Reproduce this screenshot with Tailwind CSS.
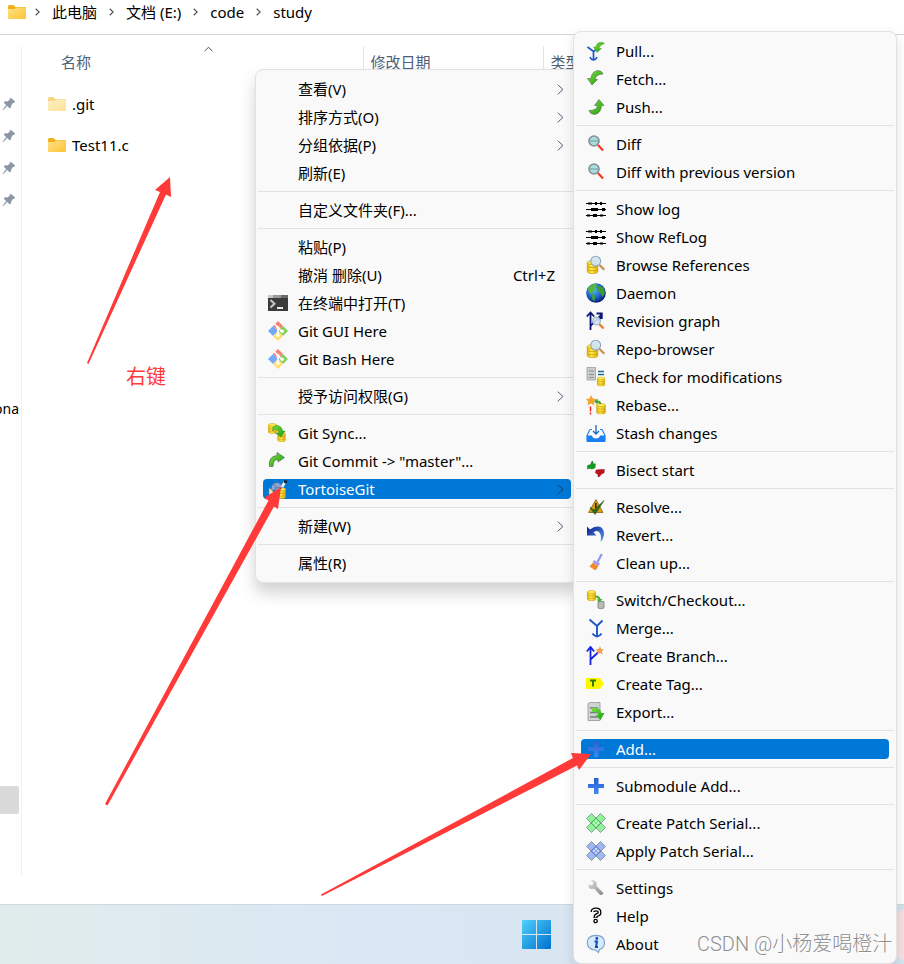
<!DOCTYPE html>
<html lang="zh-CN">
<head>
  <meta charset="UTF-8" />
  <meta name="viewport" content="width=device-width, initial-scale=1.0"/>
  <title>study</title>
  <script src="https://cdn.jsdelivr.net/npm/@tailwindcss/browser@4"></script>
</head>
<body class="bg-white text-black text-[15px] leading-5 font-['Noto_Sans','Noto_Sans_CJK_SC',sans-serif]">

  <!-- Icon sprite (kept rendered at zero size, gradients are lost with display:none) -->
  <svg class="absolute w-0 h-0" aria-hidden="true">
    <defs>
      <linearGradient id="gFolder" x1="0" y1="0" x2="1" y2="1"><stop offset="0" stop-color="#ffe08a"/><stop offset="1" stop-color="#fcc433"/></linearGradient>
      <linearGradient id="gGreen" x1="0" y1="0" x2="1" y2="1"><stop offset="0" stop-color="#7be23c"/><stop offset="1" stop-color="#1f9a12"/></linearGradient>
      <linearGradient id="gYellow" x1="0" y1="0" x2="1" y2="0"><stop offset="0" stop-color="#e8b80c"/><stop offset=".4" stop-color="#fff04a"/><stop offset="1" stop-color="#e0ae08"/></linearGradient>
      <linearGradient id="gBlue" x1="0" y1="0" x2="1" y2="1"><stop offset="0" stop-color="#0a1d8c"/><stop offset="1" stop-color="#5b9cf0"/></linearGradient>
      <linearGradient id="gPlus" x1="0" y1="0" x2="0" y2="1"><stop offset="0" stop-color="#2b5fd0"/><stop offset="1" stop-color="#3f8af0"/></linearGradient>
      <linearGradient id="gGrey" x1="0" y1="0" x2="1" y2="1"><stop offset="0" stop-color="#dcdcdc"/><stop offset="1" stop-color="#8a8a8a"/></linearGradient>
      <linearGradient id="gWin" x1="0" y1="0" x2="1" y2="1"><stop offset="0" stop-color="#4fd0fa"/><stop offset="1" stop-color="#0070d0"/></linearGradient>
      <radialGradient id="gGlobe" cx=".4" cy=".35" r=".65"><stop offset="0" stop-color="#5ab8f4"/><stop offset=".6" stop-color="#1c62c8"/><stop offset="1" stop-color="#0a1f78"/></radialGradient>

      <symbol id="folder" viewBox="0 0 18 14"><path d="M0 1.5Q0 0 1.5 0H5.5L7.500 2H17Q18 2 18 3V6H0Z" fill="#f3b01c"/><path d="M0 4H6.500L8 2.500H17Q18 2.500 18 3.500V13Q18 14 17 14H1Q0 14 0 13Z" fill="url(#gFolder)"/></symbol>
      <symbol id="pin" viewBox="0 0 14 14"><path d="M8.600 .8L13.200 4.600Q12 6 10.500 6.400L9.200 8.700Q9.400 10.600 8 11.600L5.200 9L1 13.200L.6 12.800L4.200 8L1.600 5.400Q3 4 5 4.500L7.500 3Q7.600 1.600 8.600 .8Z" fill="#8a96a3"/></symbol>
      <symbol id="db" viewBox="0 0 10 12"><path d="M.5 2.200V10Q.5 11.600 5 11.600T9.500 10V2.200Z" fill="url(#gYellow)" stroke="#c9980a" stroke-width=".6"/><ellipse cx="5" cy="2.200" rx="4.500" ry="1.700" fill="#ffee55" stroke="#c9980a" stroke-width=".6"/><path d="M.5 5Q.8 6.500 5 6.500T9.500 5M.5 7.800Q.8 9.300 5 9.300T9.500 7.800" fill="none" stroke="#c9980a" stroke-width=".7"/></symbol>
      <symbol id="lens" viewBox="0 0 16 16"><circle cx="6.200" cy="6.200" r="4.900" fill="#cfe3f4" fill-opacity=".9" stroke="#8fa3b6" stroke-width="1.100"/><path d="M10 10L14.800 14.800" stroke="#c98b50" stroke-width="2.200"/></symbol>

      <symbol id="terminal" viewBox="0 0 20 20"><path d="M0 3H20V18H0Z" fill="#3c3c3c"/><path d="M0 2H20V5H0Z" fill="#9a9a9a"/><path d="M0 2H5V5H0Z" fill="#c8c8c8"/><path d="M13 2H20V5H13Z" fill="#6a6a6a"/><path d="M2.500 7L6.500 10.800L2.500 14.500" fill="none" stroke="#c8c8c8" stroke-width="2"/><path d="M9 15H15" stroke="#fff" stroke-width="1.800"/></symbol>
      <symbol id="git" viewBox="0 0 20 20"><path d="M10 0L15 5L10 10L5 5Z" fill="#fa8072"/><path d="M5 5L10 10L5 15L0 10Z" fill="#74a8fb"/><path d="M15 5L20 10L15 15L10 10Z" fill="#84d05c"/><path d="M10 10L15 15L10 20L5 15Z" fill="#ffdf70"/><path d="M6.500 3L10 6.500V14M10 7L14 10.500" fill="none" stroke="#fff" stroke-width="1.600"/><circle cx="10" cy="6.500" r="1.600" fill="#fff"/><circle cx="10" cy="14.200" r="1.700" fill="#fff"/><circle cx="14.200" cy="10.300" r="1.700" fill="#fff"/></symbol>
      <symbol id="sync" viewBox="0 0 20 20"><use href="#db" x="0" y="0" width="9" height="11"/><use href="#db" x="9" y="9" width="9" height="10"/><path d="M4 6Q5 2.500 9 2.500Q14 3 14.500 8H17L13 14L7.500 10H10.500Q10 6.500 7.500 6Q5.500 6 5 8Z" fill="url(#gGreen)" stroke="#2a8a1c" stroke-width=".5"/></symbol>
      <symbol id="commit" viewBox="0 0 20 20"><path d="M1.500 15.500Q0 5.500 9 4.500V1.500L16.500 6.500L10 11V8.500Q5 8.500 5 15.500Z" fill="url(#gGreen)" stroke="#5c7a55" stroke-width=".8"/></symbol>
      <symbol id="tortoise" viewBox="0 0 20 20"><use href="#db" x="8" y="8" width="10" height="12"/><path d="M3 11Q3 4 8.500 3.500Q14 3.500 14 9L10 12Z" fill="#86a5d8" stroke="#4d6390" stroke-width=".7"/><path d="M6 5L8 9L12 8M8 9L6 12" fill="none" stroke="#4d6390" stroke-width=".7"/><path d="M1 9L4 11L8 17L4 18L1 15Z" fill="#efe3b8" stroke="#7b7867" stroke-width=".5"/><path d="M14 8L17 3" stroke="#f0f0f0" stroke-width="2.600"/><circle cx="17.500" cy="2.700" r="1.700" fill="#222"/></symbol>
      <symbol id="pull" viewBox="0 0 20 20"><path d="M1.500 6L7.500 10.500L11 8M7.500 10V18.500M4 16Q5 18.600 7.500 19Q10 18.600 11 16" fill="none" stroke="#1d57c4" stroke-width="1.700"/><path d="M18.500 2.500Q16 .5 13 1.500Q10 3 10 6H7.500L11 11.500L15.500 7.500H13Q13 4.500 18.500 2.500Z" fill="url(#gGreen)" stroke="#3f8a2c" stroke-width=".4"/></symbol>
      <symbol id="fetch" viewBox="0 0 20 20"><path d="M17 5Q16 1.500 11.500 1.500Q5.500 3 5 9.500H1.500L6 16L11.500 10.500H9Q9.500 5.500 17 5Z" fill="url(#gGreen)" stroke="#5c7a55" stroke-width=".7"/></symbol>
      <symbol id="push" viewBox="0 0 20 20"><path d="M3 13.500Q4 17.500 9 17.500Q15 16 15.500 8.500H18L13 2.500L8.500 8.500H11.500Q11 13.500 3 13.500Z" fill="url(#gGreen)" stroke="#5c7a55" stroke-width=".7"/></symbol>
      <symbol id="diff" viewBox="0 0 20 20"><circle cx="8" cy="7" r="5" fill="#a9dcdc" stroke="#858f92" stroke-width="1.600"/><path d="M4 7H12" stroke="#6f9d9f" stroke-width="1"/><path d="M12 11L17 16.500" stroke="#ef3a24" stroke-width="2.200"/></symbol>
      <symbol id="log" viewBox="0 0 20 20"><path d="M0 4.500H20M0 10.500H20M0 16.500H20" stroke="#000" stroke-width="1.200"/><path d="M2 3.500H6V5.500H2ZM9 3H11V6H9ZM14 3H16V6H14ZM5 9H12V12H5ZM16 9H19V12H16ZM1 15.500H4V17.500H1ZM7 15H11V18H7ZM14 15.500H17V17.500H14Z" fill="#000"/></symbol>
      <symbol id="browse" viewBox="0 0 20 20"><use href="#db" x="0" y="5" width="13" height="14"/><use href="#lens" x="3.500" y="0" width="16" height="16"/></symbol>
      <symbol id="globe" viewBox="0 0 20 20"><circle cx="10" cy="10" r="9.800" fill="url(#gGlobe)"/><path d="M3 3.500Q6 1 10 .5L11 3L8.500 5L9 8L5.500 9L7 11.500L4 10Q1 8 3 3.500Z" fill="#52b93a"/><path d="M11 4Q15 1.500 17.500 5Q19.500 8 18.500 11L16.500 14L14.500 10L11.500 8Z" fill="#3d9c34"/><path d="M5.500 11L9.500 12.500L8.500 18L6.500 17Z" fill="#3ca045"/></symbol>
      <symbol id="graph" viewBox="0 0 20 20"><path d="M4.500 19V2M.8 5.500L4.500 1.500L8.200 5.500M4.500 15L15.500 3.500M10.500 2.500H15.800V8M12 10L16 5" fill="none" stroke="#0a1478" stroke-width="1.800"/><use href="#lens" x="5.500" y="5" width="13" height="13"/><path d="M13.500 13.500L17.500 17.500" stroke="#f08030" stroke-width="2.200"/></symbol>
      <symbol id="check" viewBox="0 0 20 20"><path d="M1 .5H9.500V13H1Z" fill="#c9cccd" stroke="#9a9fa1" stroke-width=".8"/><path d="M3 4H8M3 7.500H8M3 10.500H8" stroke="#8d9395" stroke-width="1.200"/><path d="M12 4.500H18M12 7.500H18" stroke="#1f6d92" stroke-width="1.500"/><use href="#db" x="10.500" y="9.500" width="9" height="10"/></symbol>
      <symbol id="rebase" viewBox="0 0 20 20"><path d="M5 0L6.800 3.500L10.500 4L7.800 6.600L8.500 10.500L5 8.500L1.500 10.500L2.200 6.600L0 4L3.500 3.500Z" fill="#f5a32c"/><path d="M4.500 11.500V16.500M4.500 17.500V19.500" stroke="#ee1c1c" stroke-width="1.400"/><use href="#db" x="10" y="8" width="10" height="11.500"/><path d="M8 6.500L11.500 3.500V5.500Q15 5.500 15.500 9H13.500Q13 7.500 11.500 7.500V9.500Z" fill="#44a12c"/></symbol>
      <symbol id="stash" viewBox="0 0 20 20"><path d="M4 6.500H6M14 6.500H16L19 12.500V18H1V12.500L4 6.500" fill="none" stroke="#1a7ff0" stroke-width="1.100"/><path d="M1 12.500H6Q6.500 15.500 10 15.500T14 12.500H19V19H1Z" fill="#1a7ff0"/><path d="M10 2V11M7 8L10 11L13 8" fill="none" stroke="#1668c0" stroke-width="1.300"/></symbol>
      <symbol id="bisect" viewBox="0 0 20 20"><path d="M1.500 5.500L4.500 4.500L6 1Q7.500 1 7 3.800H9.500L9 8L6 9L3.500 8.500L1.500 9Z" fill="#149a1c" stroke="#1b5e20" stroke-width=".4"/><path d="M18 13L15.500 14L13 17Q11.500 17.500 12 14.500L9.500 13L10 10L14 9.500L18.500 9.500Z" fill="#c4101c" stroke="#6e0a10" stroke-width=".4"/></symbol>
      <symbol id="resolve" viewBox="0 0 20 20"><path d="M10 2.500L17 15.500H2.500Z" fill="#d99a14" stroke="#8a6414" stroke-width=".8"/><path d="M9.800 6V11" stroke="#222" stroke-width="1.500"/><path d="M4 10.500L8 13L18 3.500L9 17.500Z" fill="#2f6d12" stroke="#234f10" stroke-width=".6"/></symbol>
      <symbol id="revert" viewBox="0 0 20 20"><path d="M1 1.500L4 4.500Q9 .3 14 1.800Q18.500 4 18 10Q17.500 14 14.500 17Q16 10 13 7Q10.500 5 7.500 7.500L10.500 10.500L1 10.500Z" fill="url(#gBlue)"/></symbol>
      <symbol id="clean" viewBox="0 0 20 20"><path d="M15.800 1L11.500 9" stroke="#8f97f5" stroke-width="2.200"/><path d="M8 7L14 10.500L12.500 13L6.500 10Z" fill="#a49cf0"/><path d="M6.500 10L12.500 13L9.500 17.500L3.500 13.500Z" fill="#f58a2a"/></symbol>
      <symbol id="switch" viewBox="0 0 20 20"><use href="#db" x="0" y="0" width="11" height="11"/><path d="M12 11.500H18V18Q15 19.500 12 18Z" fill="#b9bbb9" stroke="#7c7f7c" stroke-width=".8"/><path d="M9.500 5.500Q14 5.500 14.500 9H16.500L13.500 12.500L10.500 9.500H12.500Q12 7.500 9.500 7.500Z" fill="#48b02c"/></symbol>
      <symbol id="merge" viewBox="0 0 20 20"><path d="M3.500 1.500L11 8L16.500 2.500M11 8V17.500M6.500 15.500Q8 18 11 18.500Q14 18 15.500 15.500" fill="none" stroke="#1d57c4" stroke-width="1.900"/></symbol>
      <symbol id="branch" viewBox="0 0 20 20"><path d="M4.500 19V1.500M.8 5.500L4.500 1L8.200 5.500M4.500 13.500L12.500 6" fill="none" stroke="#1522e8" stroke-width="1.800"/><path d="M14 0L15.200 3L18 3.300L15.900 5.300L16.600 8.500L14 6.800L11.200 8.500L11.900 5.300L9.500 3.300L12.700 3Z" fill="#f3a04e"/></symbol>
      <symbol id="tag" viewBox="0 0 20 20"><path d="M0 4H14L18 9.500L14 15H0Z" fill="#fdf800"/><path d="M4 6.500H10M7 6.500V12.500" stroke="#2c7a0c" stroke-width="2"/></symbol>
      <symbol id="export" viewBox="0 0 20 20"><path d="M2 1.500L4 .5H14V18.500H2Z" fill="#cfd3d4" stroke="#94999b" stroke-width=".8"/><path d="M4 6H12M4 10.500H12M4 15H12" stroke="#787e80" stroke-width="1.300"/><path d="M6 6Q14 4.500 15.500 11H18.500L14.500 18L9.500 13H12Q11 9 6 10Z" fill="url(#gGreen)"/></symbol>
      <symbol id="plus" viewBox="0 0 20 20"><path d="M8 2H12.500V8H18V12H12.500V18H8V12H2V8H8Z" fill="url(#gPlus)"/></symbol>
      <symbol id="patch" viewBox="0 0 20 20"><path d="M5.500 .5L19.500 14.500L14.500 19.500L.5 5.500Z" fill="currentColor" fill-opacity=".75" stroke="#5f6f66" stroke-width=".6"/><path d="M14.500 .5L19.500 5.500L5.500 19.500L.5 14.500Z" fill="currentColor" fill-opacity=".75" stroke="#5f6f66" stroke-width=".6"/><path d="M5 10L10 5L15 10L10 15Z" fill="currentColor" stroke="#5f6f66" stroke-width=".5"/><path d="M9.200 7.200H10.800V8.800H9.200ZM7.200 9.200H8.800V10.800H7.200ZM11.200 9.200H12.800V10.800H11.200ZM9.200 11.200H10.800V12.800H9.200Z" fill="#fff"/></symbol>
      <symbol id="settings" viewBox="0 0 20 20"><path d="M5 2.500L7.500 5L6 7.500L3 6.500Q1.500 9 4 10.500Q6 11.500 8 10.500L14 17Q17 17.500 17.500 15L10.500 8Q11.500 5 9.500 3.500Q7.500 1.800 5 2.500Z" fill="url(#gGrey)"/></symbol>
      <symbol id="help" viewBox="0 0 20 20"><path d="M6.500 6Q6.500 3.500 10 3.500T13.500 6.500Q13.500 8.500 11 9Q9.500 9.500 9.500 12" fill="none" stroke="#000" stroke-width="4"/><path d="M6.500 6Q6.500 3.500 10 3.500T13.500 6.500Q13.500 8.500 11 9Q9.500 9.500 9.500 11.500" fill="none" stroke="#fff" stroke-width="1.300"/><circle cx="9.600" cy="15" r="1.700" fill="#fff" stroke="#000" stroke-width="1.300"/></symbol>
      <symbol id="about" viewBox="0 0 20 20"><path d="M10 1.300Q18.500 1.500 18.500 8.500Q18.500 14 13.500 15.500L12.500 18.500L9.500 16Q1.300 15.500 1.300 8.500Q1.500 1.500 10 1.300Z" fill="#d7ebfb" stroke="#7fa3cc" stroke-width="1.200"/><circle cx="10.800" cy="4.500" r="1.400" fill="#1548b8"/><path d="M8.500 7.500H11L10 13H12" fill="none" stroke="#1548b8" stroke-width="2"/></symbol>
    </defs>
  </svg>

  <div class="relative min-h-screen flex flex-col overflow-hidden">

    <!-- Address bar -->
    <nav class="border-b border-[#d6d6d6] pl-2 pb-2.5" aria-label="路径">
      <ol class="flex items-center h-6 gap-3">
        <li class="-mr-[3px]"><svg class="w-[18px] h-[14px]"><use href="#folder"/></svg></li>
        <li><svg class="w-[5px] h-2" viewBox="0 0 5 8"><path d="M.7 .7L4.200 4L.7 7.300" fill="none" stroke="#555" stroke-width="1.200"/></svg></li>
        <li><a href="#">此电脑</a></li>
        <li><svg class="w-[5px] h-2" viewBox="0 0 5 8"><path d="M.7 .7L4.200 4L.7 7.300" fill="none" stroke="#555" stroke-width="1.200"/></svg></li>
        <li><a href="#">文档 (E:)</a></li>
        <li><svg class="w-[5px] h-2" viewBox="0 0 5 8"><path d="M.7 .7L4.200 4L.7 7.300" fill="none" stroke="#555" stroke-width="1.200"/></svg></li>
        <li><a href="#">code</a></li>
        <li><svg class="w-[5px] h-2" viewBox="0 0 5 8"><path d="M.7 .7L4.200 4L.7 7.300" fill="none" stroke="#555" stroke-width="1.200"/></svg></li>
        <li><a href="#">study</a></li>
      </ol>
    </nav>

    <main class="flex-1 flex pt-[11px] pb-[29px]">
      <!-- Navigation pane -->
      <aside class="w-[22px] shrink-0 border-r border-[#f0f0f0] flex flex-col overflow-hidden">
        <div class="flex flex-col gap-[18px] pt-[51px] pl-0.5">
          <svg class="w-3.5 h-3.5"><use href="#pin"/></svg>
          <svg class="w-3.5 h-3.5"><use href="#pin"/></svg>
          <svg class="w-3.5 h-3.5"><use href="#pin"/></svg>
          <svg class="w-3.5 h-3.5"><use href="#pin"/></svg>
        </div>
        <a href="#" class="mt-48 w-[19px] flex justify-end text-sm leading-5">ona</a>
        <div class="mt-auto mb-[61px] w-[19px] h-7 bg-[#d9d9d9] rounded-r-xs"></div>
      </aside>

      <!-- File list -->
      <div class="flex-1">
        <table class="w-full table-fixed text-left">
          <colgroup><col class="w-[341px]"><col class="w-[180px]"><col></colgroup>
          <thead class="text-[#4c607a]">
            <tr>
              <th class="relative h-[37px] p-0 pl-[39px] align-top font-normal leading-8">
                名称
                <svg class="absolute left-[182px] top-0 w-[9px] h-[6px]" viewBox="0 0 9 6"><path d="M.5 5.300L4.500 1.200L8.500 5.300" fill="none" stroke="#555" stroke-width="1"/></svg>
              </th>
              <th class="p-0 pl-[7px] align-top font-normal leading-8 border-l border-[#e5e5e5]">修改日期</th>
              <th class="p-0 pl-[7px] align-top font-normal leading-8 border-l border-[#e5e5e5]">类型</th>
            </tr>
          </thead>
          <tbody>
            <tr>
              <td class="h-[41px] p-0 pl-[26px]"><div class="flex items-center gap-[6px]"><svg class="w-[18px] h-[14px] opacity-50"><use href="#folder"/></svg>.git</div></td>
            </tr>
            <tr>
              <td class="h-[41px] p-0 pl-[26px]"><div class="flex items-center gap-[6px]"><svg class="w-[18px] h-[14px]"><use href="#folder"/></svg>Test11.c</div></td>
            </tr>
          </tbody>
        </table>
      </div>
    </main>

    <!-- Taskbar -->
    <footer class="relative h-[60px] border-t border-[#cdd8e0] flex items-center pl-[522px] bg-linear-to-r from-[#e0eceb] via-[#dbe7f4] via-40% to-[#d3e4ee]">
      <button type="button" aria-label="开始">
        <svg class="block w-[29px] h-[29px]" viewBox="0 0 29 29"><path d="M1 0H14V14H0V1Q0 0 1 0ZM15 0H28Q29 0 29 1V14H15ZM0 15H14V29H1Q0 29 0 28ZM15 15H29V28Q29 29 28 29H15Z" fill="url(#gWin)"/></svg>
      </button>
      <div class="ml-auto w-[7px] h-[50px] rounded-l-md bg-[#f7dfe2]"></div>
    </footer>

    <!-- Menus -->
    <div id="contextMenu" role="menu" class="absolute left-[255px] top-[69px] w-[324px] flex flex-col gap-2 px-[7px] py-[9px] bg-[#f9f9f9] border border-[#e2e2e2] rounded-lg shadow-[0_10px_16px_rgba(0,0,0,0.18)]"></div>
    <div id="gitMenu" role="menu" class="absolute left-[573px] top-[31px] w-[324px] flex flex-col gap-2 px-[7px] py-[9px] bg-[#f9f9f9] border border-[#e2e2e2] rounded-lg shadow-[0_4px_12px_rgba(0,0,0,0.12)]"></div>

    <!-- Annotations -->
    <p class="absolute left-[126px] top-[365px] text-xl leading-6 text-[#ff3a38]">右键</p>
    <p class="absolute left-[697px] top-[932px] text-xl leading-6 font-light whitespace-nowrap text-[#8f8f8f] font-['Roboto','Noto_Sans_CJK_SC',sans-serif] text-shadow-[1px_1px_0_#ffffff]">CSDN @小杨爱喝橙汁</p>
    <svg class="absolute left-0 top-0 w-[904px] h-[964px] pointer-events-none" viewBox="0 0 904 964" fill="#ff3a38">
      <path d="M170 177L155 190L160 192L87 363L88.500 364L166 194.500L171 197Z"/>
      <path d="M281 487L264 498L268.500 500.500L105 804L107.500 805.500L274 506.500L278 509Z"/>
      <path d="M591 754L571 753L573 758L321 894.500L322 896L577 765.500L579 770Z"/>
    </svg>
  </div>

  <script>
    // null draws a separator
    const contextItems = [
      { label: '查看(V)', sub: true },
      { label: '排序方式(O)', sub: true },
      { label: '分组依据(P)', sub: true },
      { label: '刷新(E)' },
      null,
      { label: '自定义文件夹(F)...' },
      null,
      { label: '粘贴(P)' },
      { label: '撤消 删除(U)', key: 'Ctrl+Z' },
      { label: '在终端中打开(T)', icon: 'terminal' },
      { label: 'Git GUI Here', icon: 'git' },
      { label: 'Git Bash Here', icon: 'git' },
      null,
      { label: '授予访问权限(G)', sub: true },
      null,
      { label: 'Git Sync...', icon: 'sync' },
      { label: 'Git Commit -> "master"...', icon: 'commit' },
      { label: 'TortoiseGit', icon: 'tortoise', sub: true, active: true },
      null,
      { label: '新建(W)', sub: true },
      null,
      { label: '属性(R)' }
    ];

    const gitItems = [
      { label: 'Pull...', icon: 'pull' },
      { label: 'Fetch...', icon: 'fetch' },
      { label: 'Push...', icon: 'push' },
      null,
      { label: 'Diff', icon: 'diff' },
      { label: 'Diff with previous version', icon: 'diff' },
      null,
      { label: 'Show log', icon: 'log' },
      { label: 'Show RefLog', icon: 'log' },
      { label: 'Browse References', icon: 'browse' },
      { label: 'Daemon', icon: 'globe' },
      { label: 'Revision graph', icon: 'graph' },
      { label: 'Repo-browser', icon: 'browse' },
      { label: 'Check for modifications', icon: 'check' },
      { label: 'Rebase...', icon: 'rebase' },
      { label: 'Stash changes', icon: 'stash' },
      null,
      { label: 'Bisect start', icon: 'bisect' },
      null,
      { label: 'Resolve...', icon: 'resolve' },
      { label: 'Revert...', icon: 'revert' },
      { label: 'Clean up...', icon: 'clean' },
      null,
      { label: 'Switch/Checkout...', icon: 'switch' },
      { label: 'Merge...', icon: 'merge' },
      { label: 'Create Branch...', icon: 'branch' },
      { label: 'Create Tag...', icon: 'tag' },
      { label: 'Export...', icon: 'export' },
      null,
      { label: 'Add...', icon: 'plus', active: true },
      null,
      { label: 'Submodule Add...', icon: 'plus' },
      null,
      { label: 'Create Patch Serial...', icon: 'patch', color: 'text-[#6cf07c]' },
      { label: 'Apply Patch Serial...', icon: 'patch', color: 'text-[#7f9ff5]' },
      null,
      { label: 'Settings', icon: 'settings' },
      { label: 'Help', icon: 'help' },
      { label: 'About', icon: 'about' }
    ];

    function renderItem(item) {
      if (!item) return '<div role="separator" class="h-px -mx-[5px] bg-[#e2e2e2]"></div>';
      const state = item.active ? 'bg-[#0078d7] text-white' : 'hover:bg-gray-200';
      const icon = item.icon ? `<svg class="w-5 h-5 ${item.color || ''}"><use href="#${item.icon}"/></svg>` : '';
      const key = item.key ? `<span class="ml-auto mr-[11px]">${item.key}</span>` : '';
      const arrow = item.sub
        ? `<svg class="ml-auto mr-0.5 w-[7px] h-[11px] ${item.active ? 'text-[#123a66]' : 'text-[#5a5a7a]'}" viewBox="0 0 7 11"><path d="M.7 .7L6 5.500L.7 10.300" fill="none" stroke="currentColor" stroke-width="1"/></svg>`
        : '';
      return `<button type="button" role="menuitem" class="flex items-center h-5 px-[5px] rounded-sm text-left whitespace-nowrap ${state}">
        <span class="w-5 h-5 mr-2.5 shrink-0">${icon}</span>${item.label}${key}${arrow}
      </button>`;
    }

    document.getElementById('contextMenu').innerHTML = contextItems.map(renderItem).join('');
    document.getElementById('gitMenu').innerHTML = gitItems.map(renderItem).join('');
  </script>
</body>
</html>
